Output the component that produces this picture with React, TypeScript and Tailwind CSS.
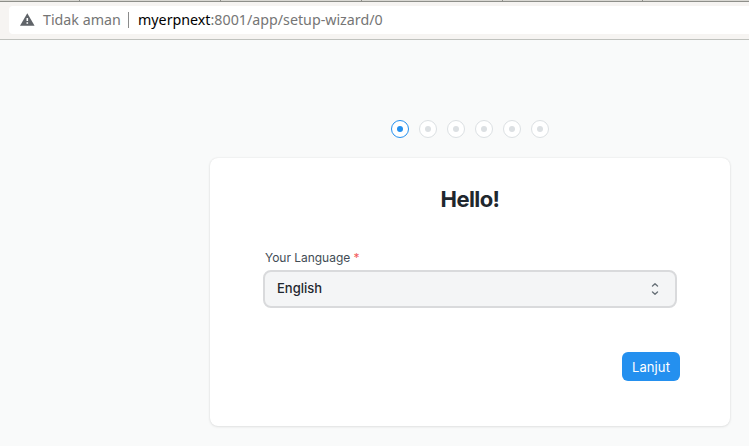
function BrowserBar() {
  return (
    <header className="h-10 bg-[#f6f4f2] font-['Noto_Sans',sans-serif]">
      <div className="flex h-0.5 border-b border-[#8e8f8a] bg-[#d9d8d3]">
        <div className="w-20 border-r border-[#8e8f8a]" />
        <div className="w-[141px] border-r border-[#8e8f8a]" />
        <div className="w-[141px] border-r border-[#8e8f8a]" />
        <div className="w-[141px] border-r border-[#8e8f8a]" />
        <div className="w-[140px] border-r border-[#8e8f8a]" />
      </div>
      <div className="h-[38px] border-b border-[#c0c2be] pt-1 pl-[9px]">
        <div className="flex h-7 items-center rounded-l-[4px] bg-white pl-[11px] text-[14.25px] leading-7 whitespace-nowrap text-[#757575]">
          <svg className="mb-px h-[13px] w-[15px] shrink-0" viewBox="0 0 15 13">
            <path d="M7.3 .2 14.6 12.8H0Z" fill="#5f6368" />
            <path d="M6.5 5h1.6v3H6.5zM6.5 9.2h1.6v1.6H6.5z" fill="#fff" />
          </svg>
          <span className="ml-2 w-[78px]">Tidak aman</span>
          <span className="ml-[7px] h-4 w-px bg-[#8b8b8b]" />
          <span className="ml-[9px]">
            <span className="text-black">myerpnext</span>:8001/app/setup-wizard/0
          </span>
        </div>
      </div>
    </header>
  );
}

function Steps() {
  return (
    <div className="flex justify-center gap-2.5">
      {[0, 1, 2, 3, 4, 5].map((step) => (
        <div
          key={step}
          className={`flex size-[18px] items-center justify-center rounded-full border bg-white ${
            step === 0 ? "border-[#2490ef]" : "border-[#dce0e3]"
          }`}
        >
          <div className={`size-1.5 rounded-full ${step === 0 ? "bg-[#2490ef]" : "bg-[#dce0e3]"}`} />
        </div>
      ))}
    </div>
  );
}

export default function App() {
  return (
    <div className="h-[446px] w-[749px] overflow-hidden bg-[#f9fafa] font-[Inter,sans-serif]">
      <BrowserBar />
      <main className="ml-[210px] w-[520px] pt-20">
        <Steps />
        <section className="mt-5 h-[268px] rounded-lg bg-white px-[50px] pt-[25px] shadow-[0_0_2px_rgba(0,0,0,0.1),0_1px_3px_rgba(0,0,0,0.08)]">
          <h1 className="text-center text-[22px] leading-8 font-bold tracking-[-0.6px] text-[#1f272e]">Hello!</h1>
          <div className="mt-[35px] pl-[5px] text-[12px] leading-4 tracking-[-0.03px] text-[#424c55]">
            Your Language <span className="text-[#f25b5b]">*</span>
          </div>
          <button className="mt-1 ml-[3px] flex h-[38px] w-[414px] items-center justify-between rounded-lg border-2 border-[#d9dadc] bg-[#f4f5f6] pr-4 pl-3 text-[13px] font-medium text-[#1f272e]">
            <span>English</span>
            <svg className="h-[14px] w-2" viewBox="0 0 8 14" fill="none" stroke="#687178" strokeWidth="1.4" strokeLinecap="round" strokeLinejoin="round">
              <path d="M1.5 4 4 1.8 6.5 4M1.5 10 4 12.2 6.5 10" />
            </svg>
          </button>
          <div className="mt-11 flex justify-end">
            <button className="h-[29px] w-[58px] rounded-md bg-[#2490ef] pt-0.5 text-[13px] tracking-[0.1px] text-white">Lanjut</button>
          </div>
        </section>
      </main>
    </div>
  );
}
